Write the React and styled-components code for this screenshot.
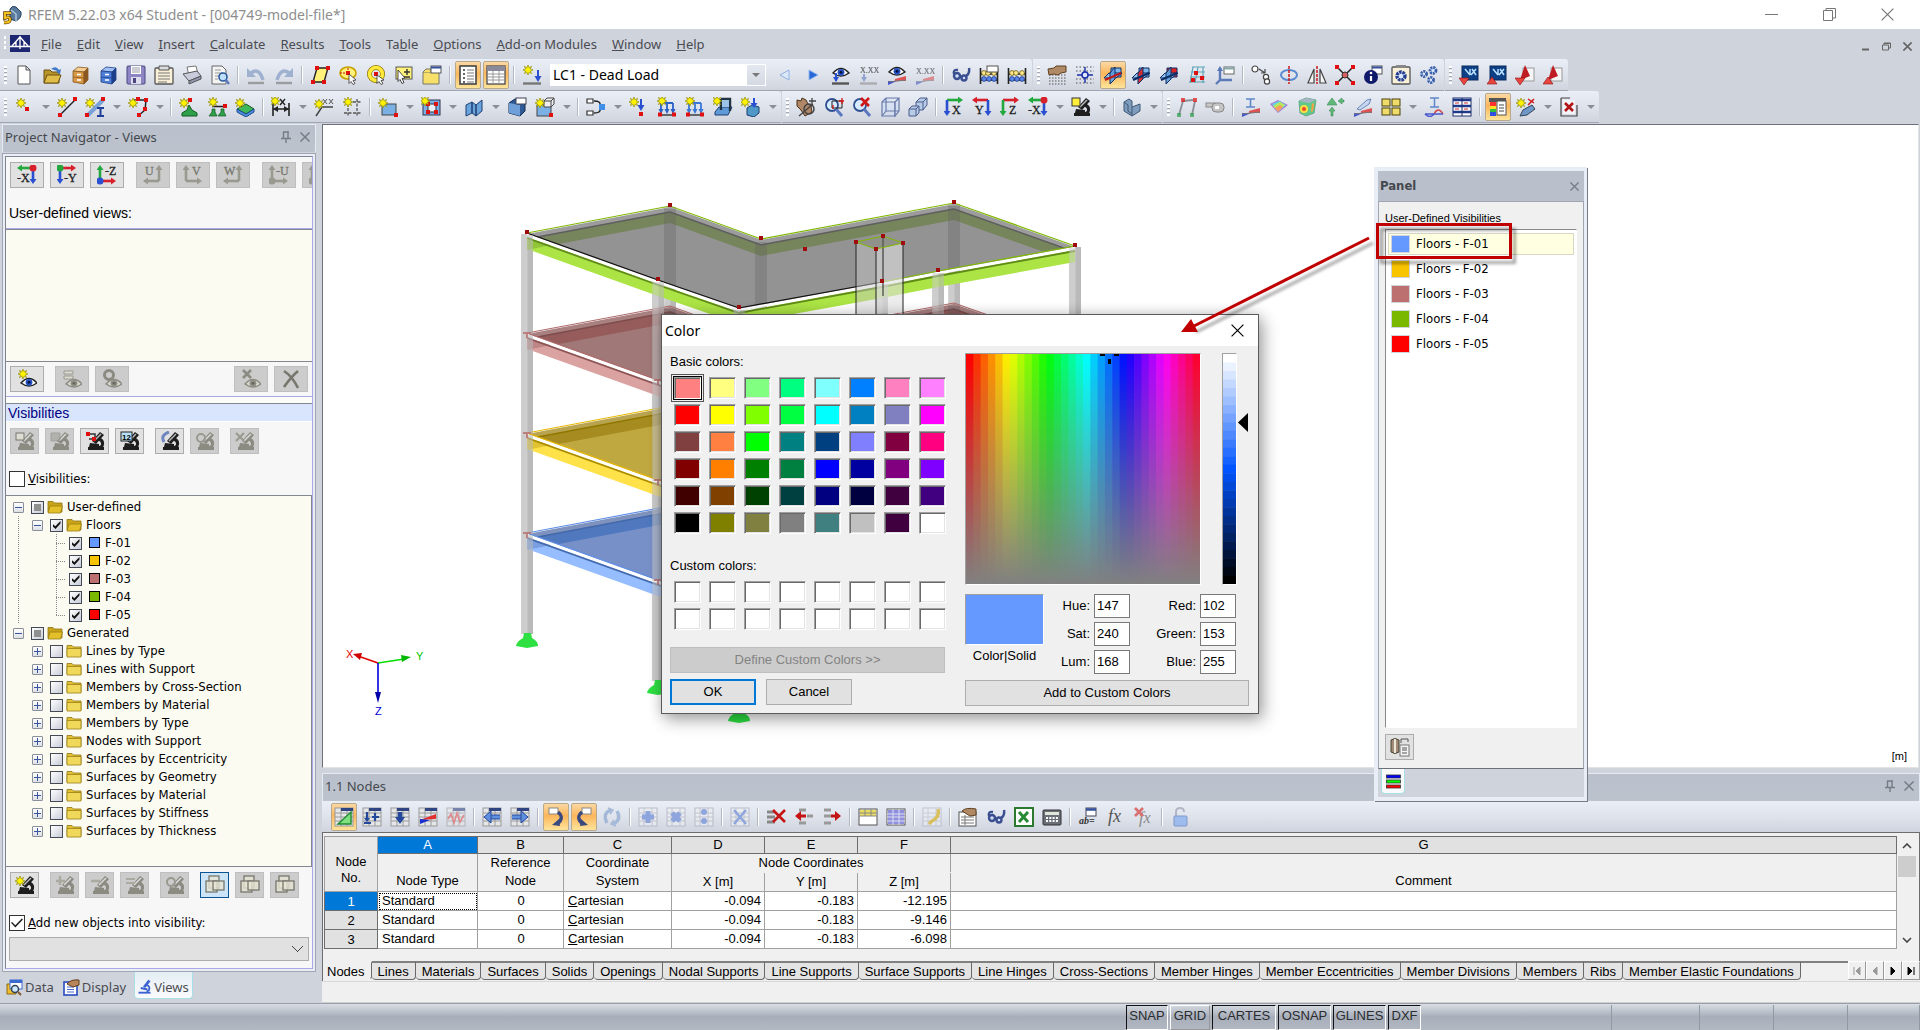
import React from "react";
import styled, { createGlobalStyle, css } from "styled-components";

const UI = `"Noto Sans", "Open Sans", sans-serif`;
const TAHOMA = `"DejaVu Sans Condensed", "DejaVu Sans", sans-serif`;
const ARIAL = `"Liberation Sans", Arial, sans-serif`;

const Global = createGlobalStyle`
  * { box-sizing: border-box; }
  body { margin: 0; background: #cfd3dc; font-family: ${UI}; font-size: 13px; color: #000; overflow: hidden; }
  button, input, select { font: inherit; color: inherit; margin: 0; padding: 0; }
  button { border: 0; background: none; }
  svg { display: block; flex: none; }
  ul { list-style: none; margin: 0; padding: 0; }
`;

/* ---------- icon primitives ---------- */

const Star = ({ x = 5, y = 5 }) => (
  <g transform={`translate(${x} ${y})`} stroke="#8f8a10" strokeWidth=".7" fill="#fff200">
    <path d="M0-5 1.2-2.2 3.6-3.6 2.4-1.1 5 0 2.4 1.1 3.6 3.6 1.2 2.2 0 5-1.2 2.2-3.6 3.6-2.4 1.1-5 0-2.4-1.1-3.6-3.6-1.2-2.2z" />
  </g>
);
const Dot = ({ x, y, c = "#e01010" }) => <rect x={x - 2} y={y - 2} width="4" height="4" fill={c} />;
const Eye = ({ x = 10, y = 7, iris = "#2450c0", gray }) => (
  <g transform={`translate(${x} ${y})`}>
    <path d="M-8 1Q0-8 8 1 0 7-8 1z" fill={gray ? "#d8d8d0" : "#fff"} stroke={gray ? "#8a8a80" : "#222"} strokeWidth="1.4" />
    <circle r="3.4" cy=".3" fill={gray ? "#8f8f86" : iris} />
    <circle r="1.4" cy=".3" fill={gray ? "#66665e" : "#001040"} />
  </g>
);
const Grid = ({ c = "#9a9a9a" }) => (
  <g>
    <rect x="1" y="1" width="18" height="18" fill="#e4e6e8" stroke={c} />
    <path d="M1 6h18M1 10h18M1 14h18M7 1v18M13 1v18" stroke={c} fill="none" />
    <rect x="7" y="1" width="12" height="3" fill="#2f4480" />
  </g>
);
const GridPale = () => (
  <g opacity=".7">
    <rect x="1" y="1" width="18" height="18" fill="#eceef2" stroke="#aab" />
    <path d="M1 6h18M1 10h18M1 14h18M6 1v18M14 1v18" stroke="#b4b8c2" fill="none" />
  </g>
);
const Scope = ({ gray }) => {
  const c = gray ? "#8b8b82" : "#1e1e1e";
  return (
    <g>
      <path d="M15 1l4 3-8 9-4-3z" fill={c} />
      <path d="M14 8q5 2 3 7l-3 2" stroke={c} strokeWidth="3" fill="none" />
      <path d="M3 16h16v3H3zM5 12l9 1v3H4z" fill={c} />
      <path d="M9 10l7-7" stroke={gray ? "#ddd" : "#bbb"} strokeWidth="1.400" />
    </g>
  );
};
const AxisArrows = ({ letter, h, v, hd = 1, vd = 1, ox = 3, oy = 3, tx, ty, dot }) => (
  <g>
    <path d={`M${ox} ${oy}h${13 * hd}`} stroke={h} strokeWidth="2.600" />
    <path d={`M${ox + 11 * hd} ${oy - 3.5}L${ox + 16 * hd} ${oy}L${ox + 11 * hd} ${oy + 3.5}z`} fill={h} />
    <path d={`M${ox} ${oy}v${13 * vd}`} stroke={v} strokeWidth="2.600" />
    <path d={`M${ox - 3.5} ${oy + 11 * vd}h7l-3.500 ${5 * vd}z`} fill={v} />
    {dot && <circle cx={ox} cy={oy} r="3.500" fill={dot} />}
    {letter && <text x={tx} y={ty} fontFamily="Liberation Serif, serif" fontSize="12" fill={h === "#99998f" ? "#77776e" : "#222"} stroke={h === "#99998f" ? "#77776e" : "#222"} strokeWidth=".3">{letter}</text>}
  </g>
);
const Abacus = () => (
  <g>
    <path d="M1.500 3v16M18.500 3v16M1 9h18M1 15h18" stroke="#222" strokeWidth="1.600" />
    <g fill="#ffe98a" stroke="#6b5a10" strokeWidth=".8"><circle cx="5" cy="8" r="2.400" /><circle cx="9" cy="8" r="2.400" /><circle cx="15" cy="8" r="2.400" /></g>
    <g fill="#5b86e8" stroke="#1a3a8a" strokeWidth=".8"><circle cx="5" cy="14" r="2.400" /><circle cx="10" cy="14" r="2.400" /><circle cx="15" cy="14" r="2.400" /></g>
  </g>
);
const Cabinet = ({ a, b, c }) => (
  <g stroke={c} strokeWidth=".8">
    <path d="M3 6l5-4 10 1-4 4z" fill={a} /><path d="M3 6l11 1v12L3 17z" fill={b} /><path d="M14 7l4-4v12l-4 4z" fill={c} />
    <path d="M3 12l11 1" /><path d="M7 9.500h4M7 15h4" stroke="#fff" strokeWidth="1.500" />
  </g>
);
const Planes = ({ front = "#7db6e8", side = "#5f9fdd", slash = "#c01818" }) => (
  <g stroke="#0c2c66" strokeWidth="1">
    <path d="M8 3h10v9H8z" fill={front} />
    <path d="M1 13l5-5h13l-6 5z" fill="#8cc0ee" fillOpacity=".9" />
    <path d="M7 8l5-6v12l-5 5z" fill={side} fillOpacity=".9" />
    <path d="M2 15L18 8" stroke={slash} strokeWidth="2" />
  </g>
);
const Loads = ({ c = "#2a62c8" }) => (
  <g>
    <path d="M4 6v9M10 6v9M16 6v9M4 6h12" stroke={c} strokeWidth="1.800" fill="none" />
    <path d="M1.500 12h5L4 17zM7.500 12h5L10 17zM13.500 12h5L16 17z" fill={c} />
    <path d="M2 18h16" stroke="#333" strokeWidth="1.400" /><Dot x={3} y={17.500} /><Dot x={17} y={17.500} />
  </g>
);
const Cad = ({ up, red }) => (
  <g>
    {red ? <g><rect x="8" y="3" width="11" height="13" fill="#f6f6f6" stroke="#999" /><path d="M10 0l5 11-10 4z" fill="#c01c24" /></g>
      : <g><rect x="3" y="1" width="16" height="14" fill="#0d3f86" stroke="#0a2c5c" /><path d="M6 4l5 6M11 4v6M13 4l4 6M17 4l-5 6" stroke="#b8e0ff" strokeWidth="1.500" fill="none" /></g>}
    <path d={up ? "M0 19h10l-5-7z" : "M0 13h10l-5 7z"} fill="#e8453e" stroke="#8a1010" strokeWidth=".6" />
  </g>
);
const Diag = () => <g><path d="M8 14L19 11v5H8z" fill="#e03030" opacity=".8" /><path d="M1 16v4l9-4z" fill="#1830d0" opacity=".8" /><path d="M1 17l18-2" stroke="#777" /></g>;
const XMark = ({ x = 10, y = 10, r = 6, c = "#c41414" }) => <path d={`M${x - r} ${y - r}L${x + r} ${y + r}M${x + r} ${y - r}L${x - r} ${y + r}`} stroke={c} strokeWidth="2.600" />;
const Table3 = ({ c, full }) => <g><rect x="1" y="2" width="18" height="16" fill="#fff" stroke="#555" /><path d={full ? "M2 3h16v14H2z" : "M2 3h16v6H2z"} fill={c} /><path d={full ? "M1 7h18M1 10h18M1 14h18M7 2v16M13 2v16" : "M1 9h18M1 6h18M7 2v7M13 2v7"} stroke={full ? "#dde" : "#888"} /></g>;
const Folder = ({ open }) => (
  <svg width="16" height="14" viewBox="0 0 16 14">
    <path d="M1 3V1.500h5L7.500 3H15v9H1z" fill={open ? "#c9a418" : "#e2c136"} stroke="#8f7410" strokeWidth=".8" />
    <path d={open ? "M3 6h12.500l-2 7H1z" : "M1 4.500h14V13H1z"} fill={open ? "#e3c02a" : "#f0d95a"} stroke="#9a7d12" strokeWidth=".8" />
  </svg>
);

const G = "#99998f";
const RED = "#d8202c", GREEN = "#22a83c", BLUE = "#2a4fd0";
const Overlap = () => (
  <g fill="#e6e3d2" fillOpacity=".8" stroke="#77776e" strokeWidth="1.300"><rect x="4" y="1" width="10" height="12" /><rect x="1" y="6" width="11" height="11" /><rect x="8" y="6" width="11" height="9" /></g>
);

const icons = {
  new: <path d="M4 1h8l4 4v14H4zM12 1v4h4" fill="#fff" stroke="#555" />,
  open: <g><path d="M2 5h6l2 2h7v11H2z" fill="#b8932a" stroke="#6b5312" /><path d="M5 10h14l-3 8H2z" fill="#e0bc48" stroke="#6b5312" /><path d="M9 4q5-4 8 1l2-1-1 5-4-2 1.500-1" fill="#3f78c8" /></g>,
  cab: <Cabinet a="#f4cf94" b="#d89a48" c="#8a5820" />,
  cab2: <Cabinet a="#9fc0f4" b="#4f80d8" c="#1f3f8a" />,
  save: <g><rect x="1" y="1" width="18" height="18" rx="1" fill="#8d86c4" stroke="#4b4680" /><rect x="5" y="1" width="10" height="8" fill="#fff" /><path d="M6 3h8M6 5h8M6 7h8" stroke="#99a" /><rect x="5" y="12" width="10" height="7" fill="#dcdcec" /><rect x="7" y="13" width="3" height="5" fill="#4b4680" /></g>,
  clip: <g><rect x="1" y="3" width="18" height="16" rx="1" fill="#faf0d8" stroke="#555" strokeWidth="1.300" /><path d="M5 1h10v4H5z" fill="#ddd" stroke="#555" /><path d="M4 8h12M4 11h12M4 14h12M4 17h9" stroke="#777" /></g>,
  print: <g><path d="M5 2l9-1 2 8-9 2z" fill="#fff" stroke="#777" /><path d="M1 9l14-3 4 5-12 5z" fill="#c9ccdc" stroke="#555" /><path d="M7 16v3l12-5v-3z" fill="#9398b0" stroke="#555" /></g>,
  preview: <g><path d="M2 1h10l4 4v14H2z" fill="#f4f4f4" stroke="#666" /><path d="M5 5h6M5 8h8M5 11h4M5 14h3" stroke="#999" /><circle cx="13" cy="12" r="4" fill="#bfe0f8" stroke="#2a5a9a" strokeWidth="1.600" /><path d="M16 15l3 4" stroke="#5a78c0" strokeWidth="2.400" /></g>,
  undo: <g opacity=".75"><path d="M5 8q8-6 12 7" stroke="#8aa0c8" strokeWidth="3.500" fill="none" /><path d="M1 3v9h9z" fill="#8aa0c8" /><path d="M2 18h16" stroke="#888" strokeWidth="2.400" /></g>,
  redo: <g opacity=".75"><path d="M15 8q-8-6-12 7" stroke="#8aa0c8" strokeWidth="3.500" fill="none" /><path d="M19 3v9h-9z" fill="#8aa0c8" /><path d="M2 18h16" stroke="#888" strokeWidth="2.400" /></g>,
  selPar: <g><path d="M7 3h11l-4 14H3z" fill="#fff27a" stroke="#222" strokeWidth="1.400" /><Dot x={7} y={3} /><Dot x={18} y={3} /><Dot x={3} y={17} /><Dot x={14} y={17} /></g>,
  selEll: <g><ellipse cx="10" cy="8" rx="8" ry="6" fill="#fff27a" stroke="#c8a000" strokeWidth="1.600" /><path d="M10 8h-8M10 8v-6" stroke="#c01010" strokeDasharray="2 1" /><Dot x={10} y={8} /><path d="M11 9l7 6-3 .5 2 3-2 1-2-3-2 2z" fill="#fff" stroke="#333" strokeWidth=".8" /></g>,
  selRing: <g><circle cx="10" cy="9" r="6.500" fill="none" stroke="#8a7000" strokeWidth="5" /><circle cx="10" cy="9" r="6.500" fill="none" stroke="#ffe93a" strokeWidth="3.600" /><Dot x={10} y={9} /><path d="M11 10l7 5-3 .5 2 3-2 1-2-3-2 2z" fill="#fff" stroke="#333" strokeWidth=".8" /></g>,
  selPlus: <g><rect x="2" y="2" width="16" height="12" fill="#fff27a" stroke="#555" /><path d="M10 7h6M13 4v6M10 12h6" stroke="#333" strokeWidth="1.400" /><path d="M4 5l7 8-3 .5 2 4-2 1-2-4-2 2z" fill="#fff" stroke="#333" strokeWidth=".9" /></g>,
  selWin: <g><path d="M1 7h16v12H1z" fill="#f6e06a" stroke="#776" /><path d="M1 7l3-3h5v3" fill="#f6e06a" stroke="#776" /><rect x="9" y="1" width="10" height="7" fill="#fff" stroke="#555" /><path d="M9 2.500h10" stroke="#35509a" strokeWidth="2" /></g>,
  list: <g><rect x="2" y="1" width="16" height="18" fill="#fff" stroke="#444" strokeWidth="1.600" /><path d="M5 5h2M5 9h2M5 13h2M5 17h2" stroke="#333" strokeWidth="1.500" /><path d="M9 5h7M9 8h7M9 11h7M9 14h7M9 17h7" stroke="#777" /></g>,
  sheet: <g><rect x="1" y="1" width="18" height="18" fill="#fff" stroke="#555" strokeWidth="1.400" /><path d="M1 1h18v5H1z" fill="#8b8a98" /><path d="M1 9h18M1 12h18M1 15h18M7 6v13M13 6v13" stroke="#999" /></g>,
  newLC: <g><Star x={6} y={5} /><path d="M16 5v8" stroke={BLUE} strokeWidth="2" /><path d="M12.500 11h7L16 17z" fill={BLUE} /><path d="M1 18.500h18" stroke="#777" strokeWidth="2.400" /></g>,
  prev: <path d="M14 5v10L5 10z" fill="#dbe8fa" stroke="#8fb0e0" />,
  next: <path d="M6 5v10l9-5z" fill="#2a68d8" stroke="#8fb8f0" />,
  eyeLoad: <g><Eye /><path d="M5 8v8" stroke={BLUE} strokeWidth="2" /><path d="M2 12h6l-3 5z" fill={BLUE} /><path d="M1 18.500h17" stroke="#555" strokeWidth="2.400" /></g>,
  xxLoad: <g opacity=".7"><text x="1" y="8" fontSize="8" fontFamily="Liberation Serif, serif" fill="#333" stroke="#333" strokeWidth=".2">X.XX</text><path d="M5 9v6" stroke="#6f8cc8" strokeWidth="2" /><path d="M2 12h6l-3 5z" fill="#6f8cc8" /><path d="M1 18.500h17" stroke="#999" strokeWidth="2.400" /></g>,
  eyeRes: <g><Diag /><Eye y={6} /></g>,
  xxRes: <g opacity=".6"><text x="1" y="9" fontSize="8" fontFamily="Liberation Serif, serif" fill="#333" stroke="#333" strokeWidth=".2">X.XX</text><Diag /></g>,
  glasses: <g fill="none" stroke="#3a4f90" strokeWidth="2.400"><circle cx="6" cy="11" r="3" fill="#cfdcf4" /><circle cx="13" cy="13" r="2.500" fill="#cfdcf4" /><path d="M3 9q-1-5 4-4M15 11q4-2 3-8M9 12h2" /></g>,
  abacusCard: <g><Abacus /><rect x="8" y="1" width="11" height="6" fill="#fff" stroke="#555" /></g>,
  abacus: <Abacus />,
  handGrid: <g><path d="M2 10h17M2 13h17M2 16h17M2 19h17" stroke="#555" strokeDasharray="1.500 1.500" /><path d="M1 4l6-1 2-2h10v6l-5 1-3 2-4-1-5 1z" fill="#b08a66" stroke="#5f4020" /></g>,
  snap: <g><path d="M1 2h18M1 6h18M1 14h18M1 18h18" stroke="#555" strokeDasharray="1.500 2" /><path d="M10 2v16M2 10h16" stroke="#1a2fa8" strokeWidth="1.400" /><circle cx="10" cy="10" r="3" fill="#dfe8ff" stroke="#1a2fa8" strokeWidth="1.500" /></g>,
  plane: <Planes />, plane2: <Planes side="#e02424" slash="#0c2c66" />, plane3: <Planes front="#e02424" slash="#0c2c66" />,
  gridRed: <g><path d="M5 2h13M4 7h14M3 12h15M2 17h16M6 2L3 18M11 2L8 18M16 2v16" stroke="#5fa3b8" strokeWidth="1.200" /><Dot x={9} y={8} /><Dot x={6} y={15} /><Dot x={15} y={13} /></g>,
  coord: <g><path d="M5 3v12h12M5 15l-4 4" stroke="#5a7ab8" strokeWidth="2.400" fill="none" /><path d="M2 6l3-5 3 5z" fill="#5a7ab8" /><rect x="9" y="2" width="10" height="7" fill="#fff" stroke="#666" /><path d="M9 3.500h10" stroke="#8aa" strokeWidth="2" /></g>,
  copyNode: <g fill="none" stroke="#444" strokeWidth="1.200"><circle cx="4" cy="4" r="3" fill="#fff" /><circle cx="15" cy="12" r="2.600" fill="#fff" /><circle cx="16" cy="16.500" r="2.600" fill="#fff" /><path d="M8 4l6 4M14 8V4M14 8h-4" /></g>,
  rotate: <g><ellipse cx="10" cy="10" rx="8" ry="5" fill="none" stroke="#5a8ad0" strokeWidth="2" /><path d="M10 1v18" stroke="#d01818" strokeWidth="1.500" strokeDasharray="3 1" /></g>,
  mirror: <g><path d="M7 4v14H1zM13 4v14h6z" fill="#f4f4f4" stroke="#444" strokeWidth="1.200" /><path d="M10 1v18" stroke="#d01818" strokeWidth="1.500" strokeDasharray="3 1" /></g>,
  scatter: <g><path d="M2 2l16 16M18 2L2 18" stroke="#222" strokeWidth="1.500" /><Dot x={2} y={2} /><Dot x={18} y={2} /><Dot x={2} y={18} /><Dot x={18} y={18} /><circle cx="10" cy="10" r="3" fill="#d86060" stroke="#333" /></g>,
  info: <g><rect x="9" y="1" width="10" height="8" fill="#fff" stroke="#555" /><path d="M9 2.500h10" stroke="#35509a" strokeWidth="2" /><circle cx="8" cy="12" r="7" fill="#101a6a" /><path d="M8 11v5" stroke="#fff" strokeWidth="2.200" /><circle cx="8" cy="8" r="1.300" fill="#fff" /></g>,
  gearBox: <g><rect x="1" y="2" width="18" height="17" rx="1" fill="#faf0d8" stroke="#555" strokeWidth="1.300" /><path d="M5 0h10v3H5z" fill="#888" /><circle cx="10" cy="11" r="4" fill="#dce8ff" stroke="#243f90" strokeWidth="3.400" strokeDasharray="2.500 .8" /></g>,
  gears: <g fill="#dce8ff" stroke="#3a5fa8" strokeWidth="2.800" strokeDasharray="2 .8"><circle cx="14" cy="5.500" r="3" /><circle cx="5" cy="9" r="2.600" /><circle cx="12" cy="15" r="2.600" /></g>,
  cadDn: <Cad />, cadUp: <Cad up />, pdfDn: <Cad red />, pdfUp: <Cad red up />,

  node: <g><Star x={7} y={6} /><Dot x={13} y={12} /></g>,
  line: <g><path d="M3 18L18 3" stroke="#222" strokeWidth="1.500" /><Star x={5} y={6} /><Dot x={3} y={18} /><Dot x={18} y={2} /></g>,
  beam: <g><path d="M3 18L18 3" stroke="#7aa0d8" strokeWidth="4" /><Star x={5} y={6} /><Dot x={2} y={18} /><Dot x={18} y={2} /><path d="M12 11h7M12 19h7M15.500 11v8" stroke="#1f3f9a" strokeWidth="2" /></g>,
  poly: <g><path d="M6 3h12l-1 10-7 6" stroke="#222" strokeWidth="1.500" fill="none" /><Star x={5} y={6} /><Dot x={10} y={2} /><Dot x={18} y={3} /><Dot x={17} y={12} /><Dot x={11} y={18} /></g>,
  support: <g><path d="M10 8l3 5 5 3v3H3v-3l5-3z" fill="#2fa04a" stroke="#145a22" /><Star x={5} y={6} /><Dot x={11} y={3} /></g>,
  lineSup: <g><path d="M5 9.500h13" stroke="#222" strokeWidth="1.500" /><path d="M5 12h3v3l2 4H2l3-4zM14 12h3v3l2 4h-8l3-4z" fill="#2fa04a" stroke="#145a22" strokeWidth=".7" /><Star x={6} y={5} /><Dot x={18} y={9} /></g>,
  solidY: <g><path d="M2 12l9-5 8 5-8 5z" fill="#3fb85a" stroke="#145a22" /><path d="M2 12v3l9 5 8-5v-3l-8 5z" fill="#4f8fe0" stroke="#1a4a8a" /><Star x={5} y={6} /></g>,
  dim: <g><path d="M2 6v13M18 6v13M2 12h16" stroke="#222" strokeWidth="1.600" /><path d="M2 12l5-3v6zM18 12l-5-3v6z" fill="#222" /><path d="M9 2l5 6M14 2L9 8" stroke="#222" strokeWidth="1.400" /><Star x={4} y={4} /></g>,
  comment: <g><path d="M2 19l6-9h11" stroke="#444" strokeWidth="1.500" fill="none" /><path d="M9 2l4 5M13 2L9 7M15 2l4 5M19 2l-4 5" stroke="#555" /><Star x={5} y={7} /></g>,
  guide: <g><path d="M6 2v18M15 2v18M2 5h17M2 16h17" stroke="#555" strokeDasharray="3 1.500" strokeWidth="1.300" /><Star x={6} y={5} /></g>,
  surface: <g><rect x="4" y="7" width="14" height="11" fill="#7ab0e4" stroke="#444" /><Star x={5} y={6} /><Dot x={18} y={18} /></g>,
  opening: <g><rect x="2" y="3" width="17" height="15" fill="#7ab0e4" stroke="#335" /><rect x="7" y="7" width="8" height="8" fill="#e6eef8" stroke="#333" /><Dot x={7} y={7} /><Dot x={15} y={15} /><Dot x={7} y={15} /><Dot x={15} y={7} /><Star x={4} y={4} /></g>,
  bend: <g><path d="M2 8l6-3v11l-6 3zM8 5l4 3v11l-4-3zM12 8l6-5v11l-6 5z" fill="#6aa4dc" stroke="#1f3f70" /></g>,
  solid: <g><path d="M2 6l6-4h10v12l-5 5-11-3z" fill="#2f5a98" stroke="#10284c" /><path d="M2 6l11 2v11L2 16z" fill="#6f9fd8" /><rect x="9" y="1" width="10" height="6" fill="#fff" stroke="#445" /></g>,
  setSurf: <g><rect x="2" y="8" width="14" height="11" fill="#7ab0e4" stroke="#444" /><path d="M9 4l3-3h7v6l-3 3H9zM9 4h7v6M16 4l3-3" fill="#eee" stroke="#444" /><Star x={5} y={6} /><Dot x={16} y={18} /></g>,
  tree: <g><path d="M1 2h6v4H1zM1 14h6v4H1z" fill="#fff" stroke="#333" strokeWidth="1.200" /><path d="M8 4q7 0 6 4M8 16q7 0 6-4" stroke="#222" fill="none" strokeWidth="1.500" /><rect x="13" y="7" width="6" height="6" fill="#3f8fe8" /></g>,
  nLoad: <g><path d="M12 2v9" stroke={BLUE} strokeWidth="2" /><path d="M8.500 8h7L12 14z" fill={BLUE} /><Star x={5} y={5} /><Dot x={12} y={17} /></g>,
  lLoad: <g><Loads /><Star x={5} y={4} /></g>,
  lLoad2: <g><Loads c="#3a78d8" /><Star x={5} y={4} /></g>,
  sLoad: <g><path d="M2 15l4-5h13l-4 8H2z" fill="#5f9ad8" stroke="#1f3f70" /><path d="M8 2h9v12M8 2v11" stroke="#234" strokeWidth="2.400" fill="none" /><path d="M9 3h7v7H9z" fill="#9cc4e8" /><Star x={4} y={4} /></g>,
  soLoad: <g><path d="M6 11l5-3 7 2v6l-5 4-7-2z" fill="#4f98c8" stroke="#1f3f70" /><path d="M13 1v6" stroke={BLUE} strokeWidth="2" /><path d="M9.500 6h7L13 11z" fill={BLUE} /><Star x={4} y={5} /></g>,
  pan: <g><path d="M1 3l4 1 1-3 4 2 2 4 3 2 1 6-7 4-4-6-4-4z" fill="#b08868" stroke="#4a3018" /><circle cx="13" cy="12" r="5" fill="none" stroke="#444" strokeWidth="1.500" /><path d="M16 1v7M13 4h7M3 19l14-12" stroke="#444" strokeWidth="1.300" /></g>,
  zoomWin: <g><circle cx="8" cy="8" r="6" fill="#d8ecff" stroke="#2f4f90" strokeWidth="1.800" /><path d="M12 12l6 7" stroke="#5a78c0" strokeWidth="3" /><path d="M8 4h10v7H8z" fill="none" stroke="#222" /><path d="M18 1v6M15 4h5M9 8v4" stroke="#d01818" strokeWidth="1.300" /></g>,
  zoomX: <g><circle cx="8" cy="8" r="6" fill="#d8ecff" stroke="#2f4f90" strokeWidth="1.800" /><path d="M12 12l6 7" stroke="#5a78c0" strokeWidth="3" /><XMark x={13} y={5} r={4} c="#d01818" /></g>,
  cube: <g fill="#cfe0f4" fillOpacity=".6" stroke="#6a7aaa" strokeWidth="1.200"><path d="M2 5h13v14H2z" /><path d="M2 5l4-4h13v13l-4 5V5l4-4M6 1v13M6 14h13M6 14l-4 5" /></g>,
  cubes: <g fill="#b8cce8" stroke="#4a5a8a"><path d="M8 5l4-4h7v7l-4 5H8z" /><path d="M8 5h7v8M15 5l4-4" fill="none" /><path d="M1 12l3-3h7v7l-3 3H1z" /><path d="M1 12h7v7M8 12l3-3" fill="none" /></g>,
  axX: <AxisArrows letter="X" h={GREEN} v={BLUE} tx={8} ty={17} />,
  axY: <AxisArrows letter="Y" h={RED} v={BLUE} ox={16} hd={-1} tx={3} ty={17} />,
  axZ: <AxisArrows letter="Z" h={RED} v={GREEN} tx={9} ty={17} />,
  axNX: <AxisArrows letter="-X" h={GREEN} v={BLUE} ox={16} hd={-1} tx={0} ty={17} dot={RED} />,
  axNY: <AxisArrows letter="-Y" h={RED} v={BLUE} tx={7} ty={17} dot={GREEN} />,
  axNZ: <AxisArrows letter="-Z" h={RED} v={GREEN} oy={16} vd={-1} tx={8} ty={10} dot={BLUE} />,
  axU: <AxisArrows letter="U" h={G} v={G} ox={16} oy={16} hd={-1} vd={-1} tx={2} ty={10} />,
  axV: <AxisArrows letter="V" h={G} v={G} oy={16} vd={-1} tx={9} ty={10} />,
  axW: <AxisArrows letter="W" h={G} v={G} ox={16} oy={16} hd={-1} vd={-1} tx={1} ty={10} />,
  axNU: <AxisArrows letter="-U" h={G} v={G} oy={16} vd={-1} tx={7} ty={10} dot={G} />,
  axNV: <AxisArrows h={G} v={G} oy={16} vd={-1} dot={G} />,
  scopeY: <g><Scope /><rect x="1" y="1" width="8" height="8" fill="#ffef3a" stroke="#333" /></g>,
  corner: <g><path d="M2 5l5-3 3 2v6l8-3v7l-8 5-8-5z" fill="#7f9cbc" stroke="#3f5a78" /><path d="M10 10v9M2 5l4 3v6l4 3" stroke="#3f5a78" fill="none" /></g>,
  frame: <g><path d="M2 18L6 4M15 18L18 4M6 4l10-1" stroke="#8a8f96" strokeWidth="1.800" /><g opacity=".7"><Dot x={6} y={3} /><Dot x={18} y={3} /><Dot x={2} y={18} c="#30a050" /><Dot x={15} y={18} c="#30a050" /></g></g>,
  roll: <g><rect x="1" y="6" width="9" height="4" fill="#c8c8c8" stroke="#888" /><rect x="7" y="6" width="12" height="9" rx="4" fill="#c4c4c4" stroke="#888" /><rect x="10" y="9" width="4" height="3" fill="#fff" /></g>,
  mDiag: <g><Diag /><path d="M5 2h9M5 10h9M9.500 2v8" stroke="#5f86c8" strokeWidth="1.600" /></g>,
  surfC: <g><path d="M1 7l8-4 10 5-10 8z" fill="#a878d8" /><path d="M3 7l7-3 7 4-8 7z" fill="#60d8e0" /><path d="M4 9l7-4 5 3-7 6z" fill="#b8e85a" /><path d="M6 11l5-3 3 2-5 5z" fill="#ff9a60" /></g>,
  cubeC: <g><path d="M2 4l7-3 10 2-2 13-8 3-6-3z" fill="#5fc88a" stroke="#6a8" /><path d="M2 4l7-3 10 2-7 3z" fill="#a8b4c8" /><circle cx="7" cy="12" r="4" fill="#f8e040" /><circle cx="7" cy="12" r="2" fill="#f04030" /><path d="M15 6l2 1-1 7-2 1z" fill="#f8a040" /></g>,
  supG: <g fill="#5fb878" stroke="#3f8f58" strokeWidth=".6"><path d="M7 1l3 4 2 3H2l2-3z" /><path d="M13 4l4-3v2h2v2h-2v2zM4 14l3-4 3 4H8v5H6v-5z" /></g>,
  diag2: <g><Diag /><path d="M4 12l10-9 4-1-2 5-9 6z" fill="#c8d8f0" stroke="#6a86b8" /></g>,
  yellow4: <g fill="#f0dc6a" stroke="#4a420a"><rect x="1" y="2" width="8" height="7" /><rect x="11" y="2" width="8" height="7" /><rect x="1" y="11" width="8" height="7" /><rect x="11" y="11" width="8" height="7" /></g>,
  wave: <g fill="none" strokeWidth="1.500"><path d="M6 1h9M6 10h9M10.500 1v9" stroke="#5f86c8" /><path d="M10 17q4-8 9 0" stroke="#d04848" /><path d="M1 17q5 5 9 0M1 17h18" stroke="#4858d0" /></g>,
  sheetB: <g><rect x="1" y="1" width="18" height="18" fill="#fff" stroke="#1f2f6a" /><path d="M1 3h18M1 9h18M1 15h18" stroke="#1f3a8a" strokeWidth="2.600" /><path d="M10 1v18" stroke="#1f2f6a" /><path d="M3 6h4M12 6h4M3 12h4M12 12h4" stroke="#d02828" /></g>,
  panelOn: <g><rect x="1" y="1" width="17" height="4" fill="#555" /><path d="M2 5h6v14H2z" fill="#ff3030" /><path d="M2 9h6v10H2z" fill="#ffe020" /><path d="M2 12h6v7H2z" fill="#30c040" /><path d="M2 15h6v4H2z" fill="#3050e0" /><rect x="9" y="4" width="9" height="14" fill="#fff" stroke="#555" /><path d="M11 8h5M11 11h5M11 14h5" stroke="#444" /></g>,
  starPen: <g><path d="M4 19l3-6 9-5 3 4-8 6z" fill="#6f98c8" stroke="#345" /><path d="M12 8l6-6M12 2l6 4" stroke="#d01818" strokeWidth="1.500" /><Star x={5} y={6} /></g>,
  delX: <g><path d="M2 1h9M2 1v18h16V8" fill="none" stroke="#444" strokeWidth="1.200" /><rect x="4" y="3" width="12" height="14" fill="#f4f4f8" /><XMark r={4} c="#b01414" /></g>,

  tEdit: <g><Grid /><path d="M4 17L17 5v12z" fill="#7fe07f" stroke="#1f8a2f" strokeWidth="1.400" /></g>,
  tSort: <g><Grid /><path d="M5 5v9M13 6v8M2 16h7M10 10h7" stroke="#24489c" strokeWidth="2.200" /><path d="M2 11h6l-3 4z" fill="#24489c" /></g>,
  tDown: <g><Grid /><path d="M10 5v6" stroke="#24489c" strokeWidth="4.500" /><path d="M5 10h10l-5 7z" fill="#24489c" /></g>,
  tDiag: <g><Grid /><path d="M2 13l16-6v5z" fill="#e03030" /><path d="M2 12v5l10-4z" fill="#1830d0" /></g>,
  tWave: <g opacity=".6"><Grid /><path d="M2 12l3-5 3 9 3-10 3 9 4-7" stroke="#e05050" fill="none" strokeWidth="1.600" /></g>,
  tLeft: <g><Grid /><path d="M9 10h9" stroke="#24489c" strokeWidth="5" /><path d="M9 10h9" stroke="#5f90e0" strokeWidth="3" /><path d="M2 10l7-6v12z" fill="#5f90e0" stroke="#24489c" /></g>,
  tRight: <g><Grid /><path d="M2 10h9" stroke="#24489c" strokeWidth="5" /><path d="M2 10h9" stroke="#5f90e0" strokeWidth="3" /><path d="M18 10l-7-6v12z" fill="#5f90e0" stroke="#24489c" /></g>,
  sync1: <g><rect x="3" y="1" width="9" height="6" fill="#fff" stroke="#888" /><path d="M12 5q7 6-1 12" stroke="#3a4a80" strokeWidth="3.400" fill="none" /><path d="M13 12l-7 6 8 1z" fill="#3a4a80" /></g>,
  sync2: <g><rect x="8" y="1" width="9" height="6" fill="#fff" stroke="#888" /><path d="M8 5q-7 6 1 12" stroke="#3a4a80" strokeWidth="3.400" fill="none" /><path d="M7 12l7 6-8 1z" fill="#3a4a80" /></g>,
  cycle: <g fill="none" stroke="#a4b8d8" strokeWidth="3.400"><path d="M5 16Q0 6 9 3M15 4q5 9-4 13" /><path d="M6 1l5 2-3 4M14 19l-5-2 3-4" strokeWidth="1.500" /></g>,
  pPlus: <g><GridPale /><path d="M10 4v12M4 10h12" stroke="#8da4dc" strokeWidth="5" /></g>,
  pX: <g><GridPale /><path d="M6 6l8 8M14 6l-8 8" stroke="#8da4dc" strokeWidth="5" /></g>,
  pDots: <g><GridPale /><circle cx="10" cy="5" r="3" fill="#8da4dc" /><circle cx="10" cy="14" r="3" fill="#8da4dc" /></g>,
  pDel: <g><GridPale /><path d="M4 3l12 14M16 3L4 17" stroke="#8da4dc" strokeWidth="2.400" /></g>,
  rDel: <g><path d="M1 5h8M1 10h8M1 15h8" stroke="#888" strokeWidth="3" /><XMark x={13} y={9} r={6} /></g>,
  rLeft: <g><path d="M5 3h7M5 16h7M13 9h6" stroke="#999" strokeWidth="3" /><path d="M6 9h6" stroke="#c41414" strokeWidth="3" /><path d="M1 9l6-5v10z" fill="#c41414" /></g>,
  rRight: <g><path d="M2 3h7M2 9h7M2 16h7" stroke="#999" strokeWidth="3" /><path d="M9 9h6" stroke="#c41414" strokeWidth="3" /><path d="M19 9l-6-5v10z" fill="#c41414" /></g>,
  tYel: <Table3 c="#e8dc60" />, tBlue: <Table3 c="#8f8fe0" full />,
  brush: <g opacity=".8"><GridPale /><path d="M16 2q2 8-6 12l-3 3" stroke="#d8b83a" strokeWidth="3.400" fill="none" /></g>,
  handSheet: <g><rect x="1" y="5" width="17" height="14" fill="#fff" stroke="#555" /><path d="M3 10h13M3 13h13M3 16h13M7 8v10" stroke="#777" /><path d="M4 4q4-4 14-2v6l-6 1z" fill="#b08a66" stroke="#5f4020" /></g>,
  excel: <g><rect x="1" y="1" width="18" height="18" fill="#fff" stroke="#2a7a30" strokeWidth="2" /><path d="M5 5l9 10M14 5L5 15" stroke="#2a8a34" strokeWidth="3" /></g>,
  calc: <g><rect x="1" y="3" width="18" height="15" rx="1" fill="#6a6f78" stroke="#333" /><rect x="3" y="5" width="14" height="3" fill="#dfe8d8" /><path d="M4 11h12M4 14h12" stroke="#fff" strokeWidth="2" strokeDasharray="2 1.300" /></g>,
  ab: <g><rect x="8" y="1" width="10" height="8" fill="#fff" stroke="#445" /><path d="M8 2.500h10" stroke="#35509a" strokeWidth="2.500" /><text x="1" y="17" fontSize="10" fontStyle="italic" fontWeight="bold" fontFamily="Liberation Serif, serif" fill="#333">ab=</text></g>,
  fx: <text x="2" y="15" fontSize="18" fontStyle="italic" fontFamily="Liberation Serif, serif" fill="#555">fx</text>,
  fxX: <g><text x="5" y="16" fontSize="16" fontStyle="italic" fontFamily="Liberation Serif, serif" fill="#888">fx</text><XMark x={5} y={5} r={4} c="#d87070" /></g>,
  lock: <g opacity=".8"><path d="M6 9V5q0-4 4-4t4 4" stroke="#aab" strokeWidth="2" fill="none" /><rect x="4" y="9" width="13" height="10" rx="1" fill="#8fb4f0" stroke="#6a86c0" /></g>,

  vNew: <g><Star x={6} y={5} /><Eye x={12} y={13} /></g>,
  vEq: <g><path d="M2 2h9v3H2zM2 7h9v3H2z" fill="#ddddd4" stroke="#99998f" /><Eye x={12} y={14} gray /></g>,
  vRef: <g><circle cx="7" cy="6" r="4.500" fill="none" stroke="#8b8b82" strokeWidth="3" /><Eye x={12} y={14} gray /></g>,
  vDel: <g><XMark x={6} y={5} r={4} c="#8b8b82" /><Eye x={12} y={14} gray /></g>,
  bigX: <path d="M3 2q8 5 14 17M17 2Q10 8 3 18" stroke="#77776e" strokeWidth="2.600" fill="none" />,
  s1: <g><Scope gray /><rect x="1" y="2" width="8" height="7" fill="#ddddd4" stroke="#77776e" /></g>,
  s2: <g><Scope gray /><path d="M1 2h9v8H1z" fill="#99998f" opacity=".5" stroke="#77776e" /></g>,
  s3: <g><Scope /><path d="M2 3h8v5H4" stroke="#333" strokeWidth="1.500" fill="none" /><Dot x={3} y={3} /><Dot x={9} y={8} /></g>,
  s4: <g><Scope /><rect x="1" y="1" width="11" height="9" fill="#b8e0f8" stroke="#222" /><text x="2" y="9" fontSize="8" fontWeight="bold" fontFamily="Liberation Sans, sans-serif">12</text></g>,
  s5: <g><Scope /><path d="M9 1Q0 4 4 11" stroke="#6f86c0" strokeWidth="3" fill="none" /></g>,
  s6: <g><Scope gray /><circle cx="6" cy="7" r="4" fill="none" stroke="#99998f" strokeWidth="2" /></g>,
  s7: <g><Scope gray /><path d="M1 2l8 8M9 2l-8 8" stroke="#99998f" strokeWidth="2" /></g>,
  sNew: <g><Scope /><Star x={5} y={6} /></g>,
  sPlus: <g><Scope gray /><path d="M5 1v9M1 6h9" stroke="#aaaaa0" strokeWidth="2.400" /></g>,
  sMinus: <g><Scope gray /><path d="M1 6h9" stroke="#aaaaa0" strokeWidth="2.600" /></g>,
  sEq: <g><Scope gray /><path d="M1 4h9M1 8h9" stroke="#aaaaa0" strokeWidth="2" /></g>,
  ov: <Overlap />, ovOff: <Overlap />,
  cyl: <g><path d="M1 3q4-3 8 0v12q-4 3-8 0z" fill="#a08a78" stroke="#443" /><path d="M4 2h2v14H4z" fill="#efe6da" /><rect x="10" y="8" width="9" height="11" fill="#f4f4f4" stroke="#777" /><path d="M12 11h5M12 13h5M12 16h5M11 6V2h7v3" stroke="#555" fill="none" /></g>,
};

const Icon = ({ n, size = 20 }) => <svg width={size} height={size} viewBox="0 0 20 20">{icons[n]}</svg>;

/* ---------- window frame ---------- */

const Root = styled.div`
  height: 100vh; display: flex; flex-direction: column; position: relative; overflow: hidden;
`;
const TitleBar = styled.header`
  height: 29px; background: #fff; display: flex; align-items: center; padding: 0 4px 0 2px; gap: 6px;
  color: #8e8e8e; font-size: 14px; flex: none;
`;
const WinButtons = styled.div`margin-left: auto; display: flex; color: #777;`;
const WinButton = styled.button`width: 58px; height: 29px; display: grid; place-items: center;`;
const MenuBar = styled.nav`
  height: 30px; display: flex; align-items: center; padding: 0 0 0 4px; flex: none; color: #4a4c52;
`;
const MenuItems = styled.div`display: flex; margin-left: 4px;`;
const MenuItem = styled.button`height: 24px; padding: 0 8px 0 7px;`;
const Grip = styled.span`
  width: 3px; height: 18px; margin: 0 3px 0 4px; flex: none;
  background: repeating-linear-gradient(#fff 0 2px, #a4a9b5 2px 3px, transparent 3px 4px);
`;
const MdiButtons = styled.div`margin-left: auto; display: flex; padding-right: 2px; color: #666;`;
const MdiButton = styled.button`width: 21px; height: 22px; padding-top: 4px; display: grid; place-items: center;`;
const ToolRow = styled.div`height: 32px; display: flex; gap: 1px; flex: none;`;
const ToolBar = styled.div`
  height: 32px; display: flex; align-items: center; padding-right: 1px;
  background: linear-gradient(#e9eef7, #dfe3ec 50%, #cfd4de); border-bottom: 1px solid #a1a5b0;
  border-radius: 0 3px 0 0;
`;
const Tool = styled.button`
  width: 26px; height: 28px; margin: 0 1px; display: grid; place-items: center; flex: none;
  border: 1px solid transparent; border-radius: 2px;
  ${(p) => p.$on && css`background: linear-gradient(#fbd9a4, #fcb65c 45%, #fde49a); border-color: #b8a88c;`}
`;
const Drop = styled.button`
  width: 15px; height: 24px; display: grid; place-items: center; flex: none;
  &::before { content: ""; border: 4px solid transparent; border-top-color: #8a8e97; border-bottom: 0; }
`;
const Sep = styled.span`width: 2px; height: 18px; margin: 0 3px; flex: none; background: #b4b8c2; border-right: 1px solid #fff;`;
const Combo = styled.div`
  width: 216px; height: 22px; margin: 0 5px 0 4px; display: flex; background: #fff; border: 1px solid #fff;
`;
const ComboSelect = styled.select`
  flex: 1; appearance: none; border: 0; background: #fff; padding-left: 2px; font-size: 14px; line-height: 20px;
`;
const ComboArrow = styled.span`
  width: 18px; display: grid; place-items: center; background: linear-gradient(#e4e8f0, #d4d9e2);
  &::before { content: ""; border: 4px solid transparent; border-top-color: #777; border-bottom: 0; }
`;

const Main = styled.main`flex: 1; display: flex; min-height: 0;`;

/* ---------- navigator ---------- */

const Dock = styled.aside`width: 318px; flex: none; display: flex; flex-direction: column; padding: 1px 2px 0;`;
const PaneTitle = styled.div`
  height: 28px; flex: none; display: flex; align-items: center; padding: 0 2px 3px; color: #45484e;
  background: linear-gradient(#b9c0cb, #bcc3cd); border: 1px solid #e6eaf2; border-bottom: 0; font-size: 13px;
`;
const PaneActions = styled.div`margin-left: auto; display: flex; gap: 3px; color: #7b7f87;`;
const PaneAction = styled.button`width: 16px; height: 18px; display: grid; place-items: center; color: #777b83;`;
const DockBody = styled.div`
  flex: 1; min-height: 0; display: flex; padding: 2px; margin-top: 1px; background: #e9edf6; border: 1px solid #a0a5b1;
`;
const DockInner = styled.div`
  flex: 1; min-width: 0; display: flex; flex-direction: column; background: #f7f7f8;
  border: 1px solid #7f848f; border-right-color: #a9a9e8; border-bottom-color: #a9a9e8;
`;
const BtnRow = styled.div`
  display: flex; gap: ${(p) => p.$gap || 11}px; padding: ${(p) => p.$top || 5}px 4px 0; overflow: hidden; flex: none;
`;
const BtnGroup = styled.div`display: flex; gap: 6px; ${(p) => p.$end && css`margin-left: auto;`}`;
const SquareBtn = styled.button`
  width: ${(p) => (p.$wide ? 34 : 29)}px; height: 26px; display: grid; place-items: center; flex: none;
  background: ${(p) => (p.$active ? "#cce4f7" : p.disabled ? "#cccccc" : "#e1e1e1")};
  border: 1px solid ${(p) => (p.$active ? "#0a5494" : p.disabled ? "#bfbfbf" : "#adadad")};
`;
const ViewsLabel = styled.div`
  font: 14px/18px ${ARIAL}; padding: 16px 3px 7px;
`;
const ViewsList = styled.div`
  height: 133px; flex: none; background: #fcfbf2; border: 1px solid #828790; border-width: 1px 0 1px 0; box-shadow: 0 -1px #a9a9e8;
`;
const Split = styled.div`height: 8px; margin-top: 4px; flex: none; background: #fdfdf8; border-top: 1px solid #a9a9e8; border-bottom: 1px solid #828790;`;
const SectionTitle = styled.h2`
  margin: 0; height: 18px; flex: none; padding-left: 2px; background: #d9e4fd; color: #000080; font: 14px/18px ${ARIAL};
  border-bottom: 1px solid #fff;
`;
const CheckLine = styled.label`
  display: flex; align-items: center; gap: 3px; height: 16px; margin: 17px 3px ${(p) => p.$gap}px; flex: none; font: 13px/16px ${TAHOMA};
`;
const Check = styled.input.attrs({ type: "checkbox" })`
  appearance: none; width: 16px; height: 16px; flex: none; background: #fff; border: 1px solid #333; display: grid; place-items: center;
  &:checked::before {
    content: ""; width: 12px; height: 10px; background: #222;
    clip-path: polygon(0 48%, 9% 40%, 36% 72%, 90% 6%, 100% 14%, 36% 94%);
  }
`;
const TreeBox = styled.div`
  flex: 1; min-height: 0; background: #fcfbf2; border: 1px solid #828790; border-left: 0; padding: 2px 0 0 3px;
  font: 13px/18px ${TAHOMA};
`;
const TreeRow = styled.li`display: flex; align-items: center; height: 18px; white-space: nowrap;`;
const dots = (dir) => `repeating-linear-gradient(${dir}, #8a8a8a 0 1px, transparent 1px 2px)`;
const Guide = styled.span`
  width: 19px; height: 18px; flex: none; display: grid; place-items: center; background-repeat: no-repeat;
  ${(p) => p.$k === "v" && css`background-image: ${dots("to bottom")}; background-size: 1px 100%; background-position: 9px 0;`}
  ${(p) => (p.$k === "tee" || p.$k === "end") && css`
    background-image: ${dots("to bottom")}, ${dots("to right")};
    background-size: 1px ${p.$k === "tee" ? 100 : 50}%, 10px 1px; background-position: 9px 0, 9px 9px;`}
`;
const Expander = styled.button`
  width: 11px; height: 11px; border: 1px solid #8a8f9a; border-radius: 1px;
  background: linear-gradient(#3a55a0, #3a55a0) center / 7px 1px no-repeat,
    ${(p) => !p.$open && css`linear-gradient(#3a55a0, #3a55a0) center / 1px 7px no-repeat,`}
    linear-gradient(#fff, #dde0e4);
`;
const TreeCheck = styled.input.attrs({ type: "checkbox" })`
  appearance: none; width: 13px; height: 13px; margin: 0 3px; flex: none; border: 1px solid #444a55;
  background: linear-gradient(135deg, #fff, #c8ccd8); display: grid; place-items: center;
  &:checked::before {
    content: ""; width: 8px; height: 8px; background: #111;
    clip-path: polygon(0 35%, 35% 65%, 100% 0, 100% 30%, 38% 100%, 0 65%);
  }
  ${(p) => p.$mixed && css`&::before { content: ""; width: 7px; height: 7px; background: #8f8f8f; }`}
`;
const TreeLabel = styled.span`padding-left: 4px;`;
const VisSelect = styled.select`
  height: 24px; margin: 0 3px 7px; appearance: none; border: 1px solid #adadad; flex: none;
  background: linear-gradient(-45deg, transparent 46%, #444 46% 58%, transparent 58%) right 5px center / 6px 6px no-repeat,
    linear-gradient(45deg, transparent 46%, #444 46% 58%, transparent 58%) right 10px center / 6px 6px no-repeat, #e1e1e1;
`;
const DockTabs = styled.div`height: 31px; flex: none; display: flex; align-items: flex-start; gap: 5px; padding: 0 3px; color: #4a4c52; font-size: 13px;`;
const DockTab = styled.button`
  display: flex; align-items: center; gap: 2px; height: 27px; padding: 3px 3px 0 1px;
  ${(p) => p.$on && css`background: linear-gradient(#e4eef4, #fafafc); border: 1px solid #a9dfe6; border-top: 0; border-radius: 0 0 4px 4px; padding: 3px 3px 0 2px;`}
`;

/* ---------- right side ---------- */

const Work = styled.section`flex: 1; min-width: 0; display: flex; flex-direction: column; padding-left: 4px;`;
const Viewport = styled.div`
  flex: 1; min-height: 0; background: #fff; border: 1px solid #6d7078; border-right: 1px solid #e3e3e3; border-bottom: 1px solid #e3e3e3; margin: 1px 1px 5px 0;
  overflow: hidden; display: flex; align-items: flex-start;
`;
const Scene = styled.svg`flex: none;`;
const Unit = styled.span`margin: auto 11px 4px auto; align-self: flex-end; font: 11px/14px ${ARIAL};`;
const TablePane = styled.div`flex: none; display: flex; flex-direction: column;`;
const TableTools = styled.div`
  height: 31px; display: flex; align-items: center; padding-left: 8px;
  background: linear-gradient(#e9eef7, #dfe3ec 50%, #cfd4de);
`;
const SheetFrame = styled.div`
  display: flex; background: #f0f0f0; border: solid #6d6d6d; border-width: 1px 1px 0 1px; padding: 3px 2px 0 1px; height: 129px; font: 13px/17px ${ARIAL};
`;
const Sheet = styled.table`
  flex: 1; border-collapse: collapse; table-layout: fixed; align-self: flex-start; min-width: 0;
  th, td { border: 1px solid #a0a0a0; padding: 0; font-weight: normal; overflow: hidden; }
  th { background: #f0f0f0; text-align: center; }
`;
const Letter = styled.th`
  && { background: ${(p) => (p.$on ? "#0078d7" : "#e1e1e1")}; color: ${(p) => (p.$on ? "#fff" : "#000")};
  border-color: #6d6d6d; height: 17px; line-height: 16px; }
`;
const Caption = styled.th`
  && { vertical-align: bottom; line-height: ${(p) => (p.rowSpan ? 18 : 17)}px; height: 19px; padding-bottom: 1px;
  ${(p) => p.$noBottom && css`border-bottom-color: #f0f0f0;`} }
`;
const CornerHead = styled.th`&& { line-height: 16px; background: #e8e8e8; vertical-align: bottom; padding-bottom: 5px; }`;
const RowHead = styled.th`
  && { background: ${(p) => (p.$on ? "#0078d7" : "#e1e1e1")}; color: ${(p) => (p.$on ? "#fff" : "#000")}; height: 19px; border-color: #6d6d6d; }
`;
const Cell = styled.td`
  && { background: #fff; height: 19px; text-align: ${(p) => p.$align || "left"}; padding: 0 3px 0 4px; line-height: 18px;
  ${(p) => p.$focus && css`outline: 1px dotted #000; outline-offset: -2px;`} }
`;
const SheetScroll = styled.div`width: 20px; height: 114px; display: flex; flex-direction: column; align-items: center; justify-content: space-between;`;
const ScrollBtn = styled.button`width: 18px; height: 20px; display: grid; place-items: center;`;
const Thumb = styled.div`width: 18px; height: 21px; background: #cdcdcd; margin-bottom: auto;`;
const SheetTabs = styled.div`height: 20px; display: flex; background: #f0f0f0; font: 13px/17px ${ARIAL}; border: 1px solid #6d6d6d; border-width: 0 0 0 1px;`;
const SheetTab = styled.button`
  height: 19px; padding: 0 6px; border: 1px solid #696969; border-top: 2px solid #808080; border-left: 0; background: #e4e4e4;
  border-radius: 0 0 4px 4px; white-space: nowrap;
  ${(p) => p.$on && css`background: #f0f0f0; border-top-color: #f0f0f0; padding: 0 6px 0 4px; border-bottom-color: #f0f0f0;`}
`;
const TabFill = styled.span`flex: 1; border-top: 2px solid #808080;`;
const TabNav = styled.button`
  width: 18px; height: 19px; display: grid; place-items: center; background: #f0f0f0; border: 1px solid #fff; border-right-color: #999; border-bottom-color: #999;
`;
const PaneFoot = styled.div`height: 22px; background: #f0f0f0; border-top: 1px solid #d8d8d8; border-bottom: 1px solid #d0d0d0;`;

const StatusBar = styled.footer`
  height: 27px; flex: none; display: flex; justify-content: flex-end; align-items: stretch; padding-top: 1px; gap: 2px;
  border-top: 1px solid #9a9ea8; background: linear-gradient(#d9dde5, #a7aeb9 50%, #b3b9c3);
  font: 13px/20px ${ARIAL}; color: #2a2c30;
`;
const StatusToggle = styled.button`
  padding: 0 1px; display: flex; align-items: flex-start; width: ${(p) => p.$w}px; justify-content: center; border: 1px solid;
  border-color: ${(p) => (p.$on ? "#111 #fff #fff #111" : "#fff #999 #999 #fff")};
`;
const StatusCell = styled.span`width: ${(p) => p.$w}px; border-right: 1px solid #9399a3;`;

/* ---------- floating windows ---------- */

const PanelWindow = styled.section`
  position: absolute; left: 1374px; top: 167px; width: 213px; height: 634px; display: flex; flex-direction: column;
  background: #cfd3dc; border: 4px solid #e9edf6; border-right-width: 3px; box-shadow: 1px 1px 0 #777b85;
`;
const PanelTitle = styled.h2`
  margin: 0; height: 30px; flex: none; display: flex; align-items: center; justify-content: space-between; padding: 0 2px;
  font: bold 13px/20px ${TAHOMA}; color: #45484e; background: #b9c0cb;
`;
const PanelBody = styled.div`
  flex: 1; min-height: 0; display: flex; flex-direction: column; background: #f0f0f0; border: 1px solid #a0a5b1; border-bottom-color: #6d7078; padding: 8px 6px;
`;
const PanelCaption = styled.div`font: 11px/16px ${ARIAL}; white-space: nowrap; padding-bottom: 3px;`;
const LegendList = styled.ul`flex: 1; background: #fff; border: 1px solid #8a8a8a; border-right-color: #fff; border-bottom-color: #fff; && { padding: 3px 2px; margin-bottom: 6px; }`;
const LegendRow = styled.li`
  height: 22px; margin-bottom: 3px; padding: 0 2px; display: flex; align-items: center; gap: 6px; font: 13px/22px ${TAHOMA};
  border: 1px solid ${(p) => (p.$on ? "#d8d8c4" : "transparent")}; background: ${(p) => (p.$on ? "#ffffe1" : "transparent")};
`;
const LegendColor = styled.span`width: 19px; height: 18px; border: 1px solid #d0d4dc; background: ${(p) => p.$c};`;
const PanelTabs = styled.div`height: 28px; flex: none; padding-left: 3px;`;
const PanelTab = styled.button`
  width: 24px; height: 25px; display: grid; place-items: center; background: #f8fafc; border: 1px solid #a9dfe6; border-top: 0; border-radius: 0 0 4px 4px;
`;

const Dialog = styled.section`
  position: absolute; left: 661px; top: 314px; width: 598px; height: 400px; display: flex; flex-direction: column;
  background: #f0f0f0; border: 1px solid #5a5a5a; box-shadow: 4px 6px 16px rgba(0,0,0,.32), 0 0 12px rgba(0,0,0,.15); font: 13px/18px ${ARIAL};
`;
const DialogTitle = styled.h2`
  margin: 0; height: 31px; flex: none; background: #fff; display: flex; justify-content: space-between; align-items: center; padding: 0 13px 0 3px; font: 14px/20px ${UI};
`;
const DialogClose = styled.button`width: 16px; height: 18px; display: grid; place-items: center;`;
const DialogBody = styled.div`flex: 1; display: flex; padding: 7px 9px 8px 8px; gap: 20px;`;
const ColorsSide = styled.div`width: 275px; display: flex; flex-direction: column;`;
const GroupTitle = styled.div`height: 18px; ${(p) => p.$later && css`margin-top: 23px;`}`;
const Swatches = styled.div`
  display: grid; grid-template-columns: repeat(8, 27px); gap: 5px 8px; padding: 6px 4px 0;
`;
const Swatch = styled.button`
  height: 22px; background: ${(p) => p.$c}; border: 1px solid; border-color: #a0a0a0 #fff #fff #a0a0a0; box-shadow: inset 1px 1px #696969, inset -1px -1px #e3e3e3;
  ${(p) => p.$on && css`outline: 1px solid #000; box-shadow: 0 0 0 2px #f0f0f0, 0 0 0 3px #555, inset 1px 1px #6a6a6a;`}
`;
const Push = styled.button`
  height: 26px; width: ${(p) => p.$w || "auto"}; text-align: center; border: 1px solid #adadad; background: #e1e1e1;
  ${(p) => p.$main && css`border: 2px solid #0078d7;`}
  &:disabled { background: #cccccc; border-color: #bfbfbf; color: #838383; }
`;
const PushRow = styled.div`display: flex; gap: 10px; margin-top: ${(p) => p.$top || 6}px;`;
const MixSide = styled.div`flex: 1; display: flex; flex-direction: column;`;
const Fields = styled.div`display: flex; gap: 21px;`;
const Spectrum = styled.svg`border: 1px solid #a0a0a0; border-right-color: #fff; border-bottom-color: #fff;`;
const LumWrap = styled.div`display: flex; gap: 1px;`;
const LumArrow = styled.svg`margin-top: 60px;`;
const MixRow = styled.div`display: flex; margin-top: 9px; height: 80px;`;
const Preview = styled.div`width: 79px; text-align: center;`;
const PreviewColor = styled.div`height: 51px; margin-bottom: 2px; background: #6699ff; border: 1px solid #a0a0a0; border-right-color: #fff; border-bottom-color: #fff;`;
const NumCol = styled.div`display: flex; flex-direction: column; gap: 4px; width: ${(p) => p.$w}px;`;
const NumField = styled.label`display: flex; justify-content: flex-end; align-items: center; gap: 4px; height: 24px;`;
const NumInput = styled.input`width: 36px; height: 24px; border: 1px solid #7a7a7a; background: #fff; padding: 0 0 2px 2px;`;
const Callout = styled.svg`position: absolute; left: 1170px; top: 215px; pointer-events: none;`;

/* ---------- data ---------- */

const mnemonic = (s) => {
  const i = s.indexOf("&");
  return i < 0 ? s : <>{s.slice(0, i)}<u>{s[i + 1]}</u>{s.slice(i + 2)}</>;
};
const menus = ["&File", "&Edit", "&View", "&Insert", "&Calculate", "&Results", "&Tools", "Ta&ble", "&Options", "&Add-on Modules", "&Window", "&Help"];

const row1a = "new open cab cab2 save clip print preview | undo redo | selPar selEll selRing selPlus selWin | list* sheet* | newLC combo prev next eyeLoad xxLoad eyeRes xxRes | glasses abacusCard abacus";
const row1b = "handGrid snap plane* plane2 plane3 gridRed coord | copyNode rotate mirror scatter info gearBox gears";
const row1c = "cadDn cadUp pdfDn pdfUp";
const row2a = "node v line beam v poly v | support lineSup solidY | dim v comment guide | surface v opening v bend v solid setSurf v | tree v nLoad lLoad lLoad2 sLoad soLoad v";
const row2b = "pan zoomWin zoomX cube cubes | axX axY axZ axNX v scopeY v | corner v";
const row2c = "frame roll | mDiag surfC cubeC supG diag2 yellow4 v wave sheetB | panelOn* starPen v delX v";
const tableTools = "tEdit* tSort tDown tDiag tWave | tLeft tRight | sync1* sync2* cycle | pPlus pX pDots | pDel | rDel rLeft rRight | tYel tBlue | brush | handSheet glasses excel calc | ab fx fxX | lock";

const tools = (spec) => spec.split(" ").map((t, i) => {
  if (t === "|") return <Sep key={i} />;
  if (t === "v") return <Drop key={i} aria-label="More" />;
  if (t === "combo") return (
    <Combo key={i}>
      <ComboSelect aria-label="Load case"><option>LC1 - Dead Load</option></ComboSelect>
      <ComboArrow />
    </Combo>
  );
  const on = t.endsWith("*");
  const n = on ? t.slice(0, -1) : t;
  return <Tool key={i} $on={on} aria-label={n}><Icon n={n} /></Tool>;
});
const Bar = ({ spec }) => <ToolBar><Grip />{tools(spec)}</ToolBar>;

const floors = [["F-01", "#6699ff"], ["F-02", "#f8c400"], ["F-03", "#bc7070"], ["F-04", "#7ab800"], ["F-05", "#ff0000"]];
const generated = ["Lines by Type", "Lines with Support", "Members by Cross-Section", "Members by Material", "Members by Type", "Nodes with Support", "Surfaces by Eccentricity", "Surfaces by Geometry", "Surfaces by Material", "Surfaces by Stiffness", "Surfaces by Thickness"];
const basic = [
  "#ff8080 #ffff80 #80ff80 #00ff80 #80ffff #0080ff #ff80c0 #ff80ff",
  "#ff0000 #ffff00 #80ff00 #00ff40 #00ffff #0080c0 #8080c0 #ff00ff",
  "#804040 #ff8040 #00ff00 #008080 #004080 #8080ff #800040 #ff0080",
  "#800000 #ff8000 #008000 #008040 #0000ff #0000a0 #800080 #8000ff",
  "#400000 #804000 #004000 #004040 #000080 #000040 #400040 #400080",
  "#000000 #808000 #808040 #808080 #408080 #c0c0c0 #400040 #ffffff",
].join(" ").split(" ");
const nodes = [["1", "-12.195"], ["2", "-9.146"], ["3", "-6.098"]];
const sheetTabs = ["Nodes", "Lines", "Materials", "Surfaces", "Solids", "Openings", "Nodal Supports", "Line Supports", "Surface Supports", "Line Hinges", "Cross-Sections", "Member Hinges", "Member Eccentricities", "Member Divisions", "Members", "Ribs", "Member Elastic Foundations"];

/* ---------- model ---------- */

const P = { A: [527, 232], B: [670, 205], C: [761, 238], D: [954, 202], E: [1075, 245], F: [938, 270], G: [882, 281], H: [739, 307], I: [658, 279] };
const path = (keys, o = 0) => keys.split("").map((k) => `${P[k][0]},${P[k][1] + o}`).join(" ");
const band = (keys, a, b) => `${path(keys, a)} ${path(keys.split("").reverse().join(""), b)}`;

const Floor = ({ dy, c, top }) => (
  <g transform={`translate(0 ${dy})`}>
    <polygon points={path("ABCDEFGHI", 2)} fill={c.fill} />
    <g clipPath="url(#slab)">
      <polygon points={band("ABCDE", 6, 17)} fill={c.back} />
      <polyline points={path("ABCDE", 3)} fill="none" stroke={c.rim} strokeWidth="4" />
      <polyline points={path("ABCDE", 6)} fill="none" stroke={c.backDark} strokeWidth="1.500" />
      {["B", "C", "D"].map((k) => <rect key={k} x={P[k][0] - 6} y={P[k][1] + 3} width="12" height="120" fill="#606060" opacity=".3" />)}
    </g>
    <polyline points={path("ABCDE")} fill="none" stroke={c.edge} strokeWidth="1.200" />
    <polygon points={band("AIHGFE", 4, 16)} fill={c.front} />
    <polyline points={path("AIHGFE", 2)} fill="none" stroke="#fff" strokeWidth="2.500" />
    <polyline points={path("AIHGFE", 5)} fill="none" stroke={c.dark} strokeWidth="1.800" />
    <polygon points={`${P.A[0]},${P.A[1] + 5} ${P.A[0] + 24},${P.A[1] + 12} ${P.A[0]},${P.A[1] + 17}`} fill={c.dark} opacity=".35" />
    <polyline points={path("AIHG")} fill="none" stroke={top ? "#111" : c.edge} strokeWidth="1.200" />
    <polyline points={path("GFE")} fill="none" stroke={c.edge} strokeWidth="1.200" />
  </g>
);
const Column = ({ k, h, o = 1 }) => (
  <g opacity={o}>
    <rect x={P[k][0] - 5.5} y={P[k][1] + 2} width="11.500" height={h} fill="#bababa" />
    <rect x={P[k][0] - 5.5} y={P[k][1] + 2} width="6" height={h} fill="#cdcdcd" />
  </g>
);
const Foot = ({ x, y }) => <path d={`M${x - 3} ${y}h7l1 5q6 3 6 8l-11 2-11-2q1-5 7-8z`} fill="#2ee042" />;

const palettes = [
  { fill: "#7890c8", back: "#4f78bf", backDark: "#4468a8", rim: "#7f92bd", edge: "#5f8fe8", front: "#95bdff", dark: "#4468a8" },
  { fill: "#c0a840", back: "#a68c20", backDark: "#8f7600", rim: "#b8a450", edge: "#e8b800", front: "#ffe14a", dark: "#a88a00" },
  { fill: "#a07878", back: "#965c5c", backDark: "#7e4c4c", rim: "#a88080", edge: "#b06a6a", front: "#dba2a2", dark: "#8a5454" },
  { fill: "#939393", back: "#77855c", backDark: "#5e5e5e", rim: "#9c9c9c", edge: "#7fb800", front: "#ace445", dark: "#5f8a1a" },
];

const Model = () => (
  <Scene width="1500" height="620" viewBox="323 125 1500 620">
    <defs><clipPath id="slab"><polygon points={path("ABCDEFGHI")} /></clipPath></defs>
    {["A", "B", "C", "D", "E", "F", "G", "H", "I"].map((k) => <Column key={k} k={k} h={400} />)}
    {palettes.map((c, i) => (
      <g key={i}>
        <Floor dy={301 - i * 100} c={c} top={i === 3} />
        <g transform={`translate(0 ${301 - i * 100})`}>
          {["A", "I", "H", "G", "F", "E"].map((k) => <Column key={k} k={k} h={99} o={0.55} />)}
        </g>
      </g>
    ))}
    <path d="M856 242l20 7v70h-20z" fill="#c8c8c8" opacity=".45" />
    <path d="M876 249l27-6v70h-27z" fill="#e0e0e0" opacity=".6" />
    <path d="M856 242v74M876 249v70M903 243v74M883 236v60" stroke="#222" fill="none" />
    <path d="M856 242l27-6 20 7-27 6z" fill="#8a8f70" fillOpacity=".3" stroke="#7fb800" />
    <g fill="#a00c0c">
      {Object.values(P).concat([[805, 249], [856, 242], [883, 236], [903, 243], [876, 249]]).map(([x, y], i) => <rect key={i} x={x - 2} y={y - 2} width="4" height="4" />)}
    </g>
    <g fill="#b87070" opacity=".8">
      {[101, 201, 301].map((d) => ["A", "I"].map((k) => <path key={k + d} d={`M${P[k][0] - 4} ${P[k][1] + d - 1}h8v2h-3v4h-2v-4h-3z`} />))}
    </g>
    <Foot x={527} y={633} /><Foot x={658} y={680} /><Foot x={739} y={708} />
    <g strokeWidth="1.600" fontFamily="Liberation Sans, sans-serif" fontSize="11">
      <path d="M378 663l-20-7" stroke="#e00000" /><path d="M353 654l9-1-2 7z" fill="#d00000" />
      <path d="M378 663l26-4" stroke="#00e000" /><path d="M411 657l-10-2 1 7z" fill="#00b800" />
      <path d="M378 663v30" stroke="#0000d8" /><path d="M378 703l-3-11h6z" fill="#0000a8" />
      <text x="346" y="658" fill="#e00000">X</text><text x="416" y="660" fill="#00c800">Y</text><text x="375" y="715" fill="#0000d8">Z</text>
    </g>
  </Scene>
);

const hueCols = Array.from({ length: 32 }, (_, i) => i);
const lumRows = Array.from({ length: 27 }, (_, i) => i);

const CloseX = ({ s = 11, w = 1 }) => <svg width={s} height={s} viewBox="0 0 11 11"><path d="M.5.5l10 10M10.500.5l-10 10" stroke="currentColor" strokeWidth={w} /></svg>;
const Pin = () => <svg width="10" height="12" viewBox="0 0 10 12"><path d="M2.500 1v6M7 1v6M2 1h6M0 7.500h10M5 8v4" stroke="currentColor" strokeWidth="1.400" fill="none" /></svg>;

const VIEW_TOP = [["axNX", "axNY", "axNZ"], ["axU", "axV", "axW"], ["axNU", "axNV"]];
const GRAY = ["axU", "axV", "axW", "axNU", "axNV", "vEq", "vRef", "vDel", "bigX", "s1", "s2", "s6", "s7", "sPlus", "sMinus", "sEq", "ovOff"];
const Group = ({ names, wide, end }) => (
  <BtnGroup $end={end}>
    {names.map((n, i) => (
      <SquareBtn key={i} $wide={wide} disabled={GRAY.includes(n)} $active={n === "ov"} aria-label={n}><Icon n={n} /></SquareBtn>
    ))}
  </BtnGroup>
);

const TreeItem = ({ guides, open, leafColor, checked, mixed, label }) => (
  <TreeRow>
    {guides.map((g, i) => <Guide key={i} $k={g} />)}
    {open !== undefined && <Guide><Expander $open={open} aria-label="Toggle" /></Guide>}
    <TreeCheck defaultChecked={checked} $mixed={mixed} aria-label={label} />
    {leafColor
      ? <svg width="16" height="14" viewBox="0 0 16 14"><rect x="4.500" y="1.500" width="10" height="10" fill={leafColor} stroke="#000" /></svg>
      : <Folder open={checked || mixed} />}
    <TreeLabel>{label}</TreeLabel>
  </TreeRow>
);

const Navigator = () => (
  <Dock>
    <PaneTitle>Project Navigator - Views
      <PaneActions><PaneAction aria-label="Pin"><Pin /></PaneAction><PaneAction aria-label="Close"><CloseX s={10} w={1.6} /></PaneAction></PaneActions>
    </PaneTitle>
    <DockBody>
      <DockInner>
        <BtnRow $gap={12}>{VIEW_TOP.map((g, i) => <Group key={i} names={g} wide />)}</BtnRow>
        <ViewsLabel>User-defined views:</ViewsLabel>
        <ViewsList />
        <BtnRow $top={4}>
          <Group names={["vNew"]} wide /><Group names={["vEq", "vRef"]} wide /><Group names={["vDel", "bigX"]} wide end />
        </BtnRow>
        <Split />
        <SectionTitle>Visibilities</SectionTitle>
        <BtnRow $top={6}>
          <Group names={["s1", "s2", "s3", "s4"]} /><Group names={["s5", "s6"]} /><Group names={["s7"]} />
        </BtnRow>
        <CheckLine $gap={8}><Check /><span><u>V</u>isibilities:</span></CheckLine>
        <TreeBox>
          <ul>
            <TreeItem guides={[]} open mixed label="User-defined" />
            <TreeItem guides={["v"]} open checked label="Floors" />
            {floors.map(([n, c], i) => <TreeItem key={n} guides={["v", "", i === 4 ? "end" : "tee"]} leafColor={c} checked label={n} />)}
            <TreeItem guides={[]} open mixed label="Generated" />
            {generated.map((n) => <TreeItem key={n} guides={[""]} open={false} label={n} />)}
          </ul>
        </TreeBox>
        <BtnRow>
          <Group names={["sNew"]} /><Group names={["sPlus", "sMinus", "sEq"]} /><Group names={["s6"]} /><Group names={["ov", "ovOff", "ovOff"]} />
        </BtnRow>
        <CheckLine $gap={6}><Check defaultChecked /><span><u>A</u>dd new objects into visibility:</span></CheckLine>
        <VisSelect aria-label="Visibility"><option></option></VisSelect>
      </DockInner>
    </DockBody>
    <DockTabs>
      <DockTab><svg width="17" height="17" viewBox="0 0 17 17"><path d="M1 5h4l1 2h4v8H1z" fill="#f0c030" stroke="#8a6a10" /><rect x="4" y="1" width="12" height="9" fill="#fff" stroke="#3a6ad0" /><path d="M4 2.500h12" stroke="#3a6ad0" strokeWidth="3" /><circle cx="9" cy="10" r="3.500" fill="#cfe8ff" stroke="#345" strokeWidth="1.500" /><path d="M12 13l3 3" stroke="#8a5a30" strokeWidth="2" /></svg>Data</DockTab>
      <DockTab><svg width="17" height="17" viewBox="0 0 17 17"><rect x="1" y="3" width="13" height="13" fill="#fff" stroke="#2a4ac0" strokeWidth="1.600" /><path d="M4 8h7M4 10.500h7M4 13h7" stroke="#4a6ad0" /><path d="M4 5q4-5 12-4v5l-6 2z" fill="#b8865a" stroke="#5f4020" /></svg>Display</DockTab>
      <DockTab $on><svg width="15" height="17" viewBox="0 0 20 20"><path d="M15 1l3 2-7 9-3-2z" fill="#3a62d0" /><path d="M13 8q5 2 3 7l-3 2M5 12l9 2" stroke="#3a62d0" strokeWidth="2.400" fill="none" /><path d="M2 17h16v2.500H2z" fill="#3a62d0" /></svg>Views</DockTab>
    </DockTabs>
  </Dock>
);

const NodesTable = () => (
  <TablePane>
    <PaneTitle>1.1 Nodes
      <PaneActions><PaneAction aria-label="Pin"><Pin /></PaneAction><PaneAction aria-label="Close"><CloseX s={10} w={1.6} /></PaneAction></PaneActions>
    </PaneTitle>
    <TableTools>{tools(tableTools)}</TableTools>
    <SheetFrame>
      <Sheet>
        <colgroup>
          {[53, 100, 86, 108, 93, 93, 93].map((w, i) => <col key={i} width={w} />)}<col />
        </colgroup>
        <thead>
          <tr>
            <CornerHead rowSpan={3}>Node<br />No.</CornerHead>
            {"ABCDEFG".split("").map((l) => <Letter key={l} $on={l === "A"}>{l}</Letter>)}
          </tr>
          <tr>
            <Caption rowSpan={2}>Node Type</Caption>
            <Caption rowSpan={2}>Reference<br />Node</Caption>
            <Caption rowSpan={2}>Coordinate<br />System</Caption>
            <Caption colSpan={3} $noBottom>Node Coordinates</Caption>
            <Caption rowSpan={2}>Comment</Caption>
          </tr>
          <tr><Caption>X [m]</Caption><Caption>Y [m]</Caption><Caption>Z [m]</Caption></tr>
        </thead>
        <tbody>
          {nodes.map(([n, z]) => (
            <tr key={n}>
              <RowHead $on={n === "1"}>{n}</RowHead>
              <Cell $focus={n === "1"}>Standard</Cell>
              <Cell $align="center">0</Cell>
              <Cell><u>C</u>artesian</Cell>
              <Cell $align="right">-0.094</Cell>
              <Cell $align="right">-0.183</Cell>
              <Cell $align="right">{z}</Cell>
              <Cell />
            </tr>
          ))}
        </tbody>
      </Sheet>
      <SheetScroll>
        <ScrollBtn aria-label="Up"><svg width="10" height="6" viewBox="0 0 10 6"><path d="M1 5l4-4 4 4" fill="none" stroke="#444" strokeWidth="1.600" /></svg></ScrollBtn>
        <Thumb />
        <ScrollBtn aria-label="Down"><svg width="10" height="6" viewBox="0 0 10 6"><path d="M1 1l4 4 4-4" fill="none" stroke="#444" strokeWidth="1.600" /></svg></ScrollBtn>
      </SheetScroll>
    </SheetFrame>
    <SheetTabs>
      {sheetTabs.map((t, i) => <SheetTab key={t} $on={i === 0}>{t}</SheetTab>)}
      <TabFill />
      {["M8 1L4 5l4 4zM2 1v8", "M7 1L3 5l4 4z", "M3 1l4 4-4 4z", "M2 1l4 4-4 4zM8 1v8"].map((d, i) => (
        <TabNav key={i} aria-label="Scroll tabs"><svg width="10" height="10" viewBox="0 0 10 10"><path d={d} fill={i < 2 ? "#999" : "#000"} stroke={i < 2 ? "#999" : "#000"} /></svg></TabNav>
      ))}
    </SheetTabs>
    <PaneFoot />
  </TablePane>
);

const Legend = () => (
  <PanelWindow>
    <PanelTitle>Panel<PaneAction aria-label="Close"><CloseX s={9} w={1.6} /></PaneAction></PanelTitle>
    <PanelBody>
      <PanelCaption>User-Defined Visibilities</PanelCaption>
      <LegendList>
        {floors.map(([n, c], i) => <LegendRow key={n} $on={i === 0}><LegendColor $c={c} />Floors - {n}</LegendRow>)}
      </LegendList>
      <SquareBtn aria-label="Options"><Icon n="cyl" /></SquareBtn>
    </PanelBody>
    <PanelTabs>
      <PanelTab aria-label="Colors"><svg width="15" height="15" viewBox="0 0 15 15" stroke="#333" strokeWidth=".8"><rect x=".5" y="1" width="14" height="3" fill="#0000ff" /><rect x=".5" y="6" width="14" height="3" fill="#00ff00" /><rect x=".5" y="11" width="14" height="3" fill="#ff0000" /></svg></PanelTab>
    </PanelTabs>
  </PanelWindow>
);

const Num = ({ label, value }) => <NumField>{label}<NumInput defaultValue={value} /></NumField>;

const ColorDialog = () => (
  <Dialog>
    <DialogTitle>Color<DialogClose aria-label="Close"><CloseX s={13} w={1} /></DialogClose></DialogTitle>
    <DialogBody>
      <ColorsSide>
        <GroupTitle>Basic colors:</GroupTitle>
        <Swatches>{basic.map((c, i) => <Swatch key={i} $c={c} $on={i === 0} aria-label={c} />)}</Swatches>
        <GroupTitle $later>Custom colors:</GroupTitle>
        <Swatches>{Array.from({ length: 16 }, (_, i) => <Swatch key={i} $c="#fff" aria-label="Empty" />)}</Swatches>
        <PushRow $top={17}><Push $w="100%" disabled>Define Custom Colors &gt;&gt;</Push></PushRow>
        <PushRow><Push $w="86px" $main>OK</Push><Push $w="86px">Cancel</Push></PushRow>
      </ColorsSide>
      <MixSide>
        <Fields>
          <Spectrum width="236" height="232" viewBox="0 0 234 230" preserveAspectRatio="none">
            <defs><linearGradient id="fade" x1="0" y1="0" x2="0" y2="1"><stop offset="0" stopColor="#808080" stopOpacity="0" /><stop offset="1" stopColor="#808080" /></linearGradient></defs>
            {hueCols.map((i) => <rect key={i} x={(i * 234) / 32} y="0" width="8" height="230" fill={`hsl(${(i * 360) / 32} 100% 50%)`} />)}
            <rect width="234" height="230" fill="url(#fade)" />
            <path d="M134 0h5v2h-5zM148 0h5v2h-5zM142 5h3v5h-3z" />
          </Spectrum>
          <LumWrap>
            <Spectrum width="15" height="232" viewBox="0 0 13 230" preserveAspectRatio="none">
              {lumRows.map((i) => <rect key={i} x="0" y={(i * 230) / 27} width="13" height="9" fill={`hsl(220 100% ${100 - (i * 100) / 26}%)`} />)}
            </Spectrum>
            <LumArrow width="10" height="19" viewBox="0 0 10 19"><path d="M0 9.500L10 0v19z" /></LumArrow>
          </LumWrap>
        </Fields>
        <MixRow>
          <Preview><PreviewColor />Color|Solid</Preview>
          <NumCol $w={86}><Num label="Hue:" value="147" /><Num label="Sat:" value="240" /><Num label="Lum:" value="168" /></NumCol>
          <NumCol $w={106}><Num label="Red:" value="102" /><Num label="Green:" value="153" /><Num label="Blue:" value="255" /></NumCol>
        </MixRow>
        <PushRow><Push $w="100%">Add to Custom Colors</Push></PushRow>
      </MixSide>
    </DialogBody>
  </Dialog>
);

export default function App() {
  return (
    <Root>
      <Global />
      <TitleBar>
        <svg width="20" height="20" viewBox="0 0 20 20"><path d="M8 4q2-4 6-2l5 5q1 6-5 9l-6-2z" fill="#5a7a9c" stroke="#23405c" /><path d="M9 5l5 4v7" stroke="#a9c4dc" strokeWidth="1.500" fill="none" /><path d="M9 8H3v5q5-2 5 1.500T2 17.500" fill="none" stroke="#5f4200" strokeWidth="3.600" /><path d="M9 8H3v5q5-2 5 1.500T2 17.500" fill="none" stroke="#f4c020" strokeWidth="2" /></svg>
        RFEM 5.22.03 x64 Student - [004749-model-file*]
        <WinButtons>
          <WinButton aria-label="Minimize"><svg width="13" height="13" viewBox="0 0 13 13"><path d="M0 6.500h13" stroke="currentColor" /></svg></WinButton>
          <WinButton aria-label="Restore"><svg width="13" height="13" viewBox="0 0 13 13"><path d="M.5 2.500h9v10h-9zM3 2.500v-2h9.500v9.500H10" fill="none" stroke="currentColor" /></svg></WinButton>
          <WinButton aria-label="Close"><CloseX s={13} /></WinButton>
        </WinButtons>
      </TitleBar>
      <MenuBar>
        <svg width="26" height="18" viewBox="0 0 26 18"><path d="M1 1v3M1 6v3M1 11v3" stroke="#fff" strokeWidth="2" /><rect x="6" width="20" height="17" fill="#1c2670" /><path d="M6 11.500h20M16 1v13M16 2L8 11M16 2l8 9M12 7v4M20 7v4" stroke="#fff" fill="none" strokeWidth="1.300" /></svg>
        <MenuItems>{menus.map((m) => <MenuItem key={m}>{mnemonic(m)}</MenuItem>)}</MenuItems>
        <MdiButtons>
          <MdiButton aria-label="Minimize window"><svg width="9" height="9" viewBox="0 0 9 9"><path d="M1 7.500h7" stroke="currentColor" strokeWidth="2" /></svg></MdiButton>
          <MdiButton aria-label="Restore window"><svg width="9" height="9" viewBox="0 0 9 9"><path d="M.5 3h6v5h-6zM2 3V1h6.500v5H7M2 1.500h6" fill="none" stroke="currentColor" /></svg></MdiButton>
          <MdiButton aria-label="Close window"><CloseX s={9} w={2} /></MdiButton>
        </MdiButtons>
      </MenuBar>
      <ToolRow><Bar spec={row1a} /><Bar spec={row1b} /><Bar spec={row1c} /></ToolRow>
      <ToolRow><Bar spec={row2a} /><Bar spec={row2b} /><Bar spec={row2c} /></ToolRow>
      <Main>
        <Navigator />
        <Work>
          <Viewport><Model /><Unit>[m]</Unit></Viewport>
          <NodesTable />
        </Work>
      </Main>
      <StatusBar>
        <StatusToggle $w={42} $on>SNAP</StatusToggle><StatusToggle $w={40}>GRID</StatusToggle><StatusToggle $w={64} $on>CARTES</StatusToggle>
        <StatusToggle $w={53} $on>OSNAP</StatusToggle><StatusToggle $w={53} $on>GLINES</StatusToggle><StatusToggle $w={33} $on>DXF</StatusToggle>
        <StatusCell $w={189} /><StatusCell $w={86} /><StatusCell $w={72} /><StatusCell $w={72} /><StatusCell $w={70} />
      </StatusBar>
      <Legend />
      <ColorDialog />
      <Callout width="370" height="130" viewBox="1170 215 370 130">
        <defs><filter id="soft" x="-10%" y="-20%" width="120%" height="140%"><feGaussianBlur stdDeviation="1.800" /></filter></defs>
        <g transform="translate(4 5)" opacity=".35" stroke="#000" fill="none" strokeWidth="3" filter="url(#soft)"><rect x="1377.500" y="224.500" width="133" height="33" /><path d="M1369 238L1192 327" /></g>
        <rect x="1377.500" y="224.500" width="133" height="33" fill="none" stroke="#c00000" strokeWidth="3" />
        <path d="M1369 238L1192 327" stroke="#c00000" strokeWidth="3" /><path d="M1181 332l10-13 7 13z" fill="#c00000" />
      </Callout>
    </Root>
  );
}
